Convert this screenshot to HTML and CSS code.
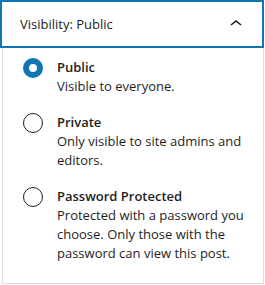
FILE: index.html
```html
<!DOCTYPE html>
<html lang="en">

<head>
  <meta charset="UTF-8">
  <meta name="viewport" content="width=device-width, initial-scale=1.0">
  <title>Visibility</title>
  <link rel="stylesheet" href="styles.css">
</head>

<body>
  <div class="panel-toggle">
    <span class="toggle-title">Visibility: Public</span>
    <svg class="chevron" width="24" height="24" viewBox="0 0 24 24">
      <path d="M6.5 12.4 12 8l5.5 4.4-.9 1.2L12 10l-4.6 3.6z"></path>
    </svg>
  </div>
  <div class="panel-body">
    <label class="option">
      <span class="radio checked"></span>
      <span class="option-text">
        <span class="option-label">Public</span>
        <span class="option-desc">Visible to everyone.</span>
      </span>
    </label>
    <label class="option">
      <span class="radio"></span>
      <span class="option-text">
        <span class="option-label">Private</span>
        <span class="option-desc">Only visible to site admins and editors.</span>
      </span>
    </label>
    <label class="option">
      <span class="radio"></span>
      <span class="option-text">
        <span class="option-label">Password Protected</span>
        <span class="option-desc">Protected with a password you choose. Only those with the password can view this post.</span>
      </span>
    </label>
  </div>
</body>

</html>
```

FILE: styles.css
```css
body {
  margin: 0;
  font-family: "Open Sans", "Noto Sans", sans-serif;
  color: #1e1e1e;
  background: #fff;
}

.panel-toggle {
  display: flex;
  align-items: center;
  justify-content: space-between;
  box-sizing: border-box;
  width: 264px;
  height: 48px;
  padding: 0 14px 0 18px;
  border: 2px solid #0f76b3;
  font-size: 13px;
}

.chevron {
  fill: #1e1e1e;
}

.panel-body {
  box-sizing: border-box;
  width: 262px;
  height: 236px;
  margin-left: 2px;
  padding: 10px 16px 0 20px;
  border: 1px solid #ddd;
  border-top: none;
}

.option {
  display: flex;
  gap: 14px;
  margin-bottom: 17px;
}

.radio {
  flex: 0 0 auto;
  box-sizing: border-box;
  width: 20px;
  height: 20px;
  border: 1.5px solid #1e1e1e;
  border-radius: 50%;
}

.radio.checked {
  border: 6px solid #0f76b3;
}

.option-text {
  display: flex;
  flex-direction: column;
  font-size: 13px;
  line-height: 19px;
}

.option-label {
  font-weight: 600;
}
```
